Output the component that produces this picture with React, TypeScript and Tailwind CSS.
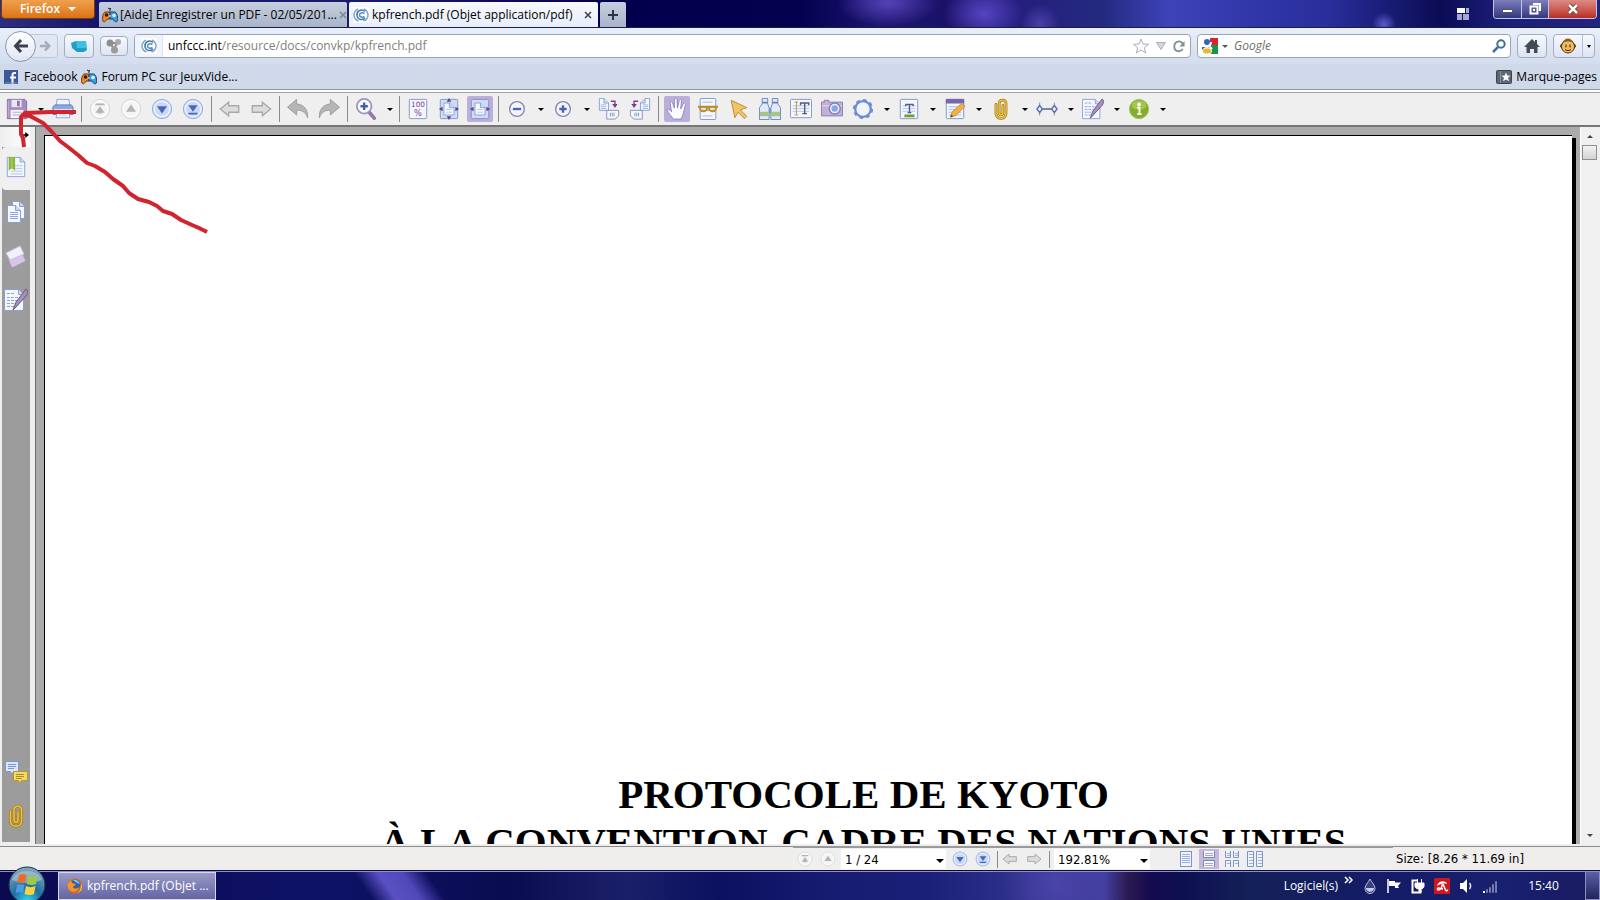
import React from 'react'

interface IconProps {
  children: React.ReactNode
  className?: string
  box?: number
}

const Icon: React.FC<IconProps> = ({ children, className = 'w-6 h-6', box = 24 }) => (
  <svg viewBox={`0 0 ${box} ${box}`} className={`${className} flex-shrink-0`} fill="none" aria-hidden="true">
    {children}
  </svg>
)

/* Shared page sheet used by most toolbar icons */
const Sheet = ({ x = 3, y = 1, w = 18, h = 22 }: { x?: number; y?: number; w?: number; h?: number }) => (
  <rect x={x + 0.5} y={y + 0.5} width={w - 1} height={h - 1} rx="1" fill="#f3f6fd" stroke="#7c93c4" />
)

const FoldedPage = ({ x, y, w, h }: { x: number; y: number; w: number; h: number }) => (
  <>
    <path
      d={`M${x} ${y}h${w - 5}l5 5v${h - 5}h-${w}z`}
      fill="#f3f7ff"
      stroke="#8a9fcf"
    />
    <path d={`M${x + w - 5} ${y}v5h5`} fill="#cfdaf2" stroke="#8a9fcf" />
  </>
)

const SaveIcon = () => (
  <Icon>
    <path d="M1.500 1.500h19l2 2v19h-21z" fill="#a78bc4" stroke="#86699f" />
    <path d="M2.500 3v18" stroke="#c6b2da" />
    <rect x="6" y="2" width="11" height="8" fill="#ece6f4" />
    <rect x="12" y="3" width="3" height="6" fill="#8d74a8" />
    <rect x="5" y="13" width="14" height="9" fill="#f7f7fb" />
    <path d="M7 15.500h10M7 18.500h10" stroke="#a9a3bb" />
  </Icon>
)

const PrintIcon = () => (
  <Icon>
    <path d="M5.500 1.500h13l1 7h-15z" fill="#eef3fd" stroke="#8b9fd0" />
    <path d="M1 10l2-2.500h18l2 2.500v8H1z" fill="#8ea7e2" stroke="#6478b4" />
    <path d="M2 12.500h20" stroke="#dfe7fb" />
    <path d="M5.500 15.500h13l1 6h-15z" fill="#f5f8ff" stroke="#8b9fd0" />
    <path d="M8 18.500h8" stroke="#b5c2e2" />
  </Icon>
)

type Dir = 'first' | 'up' | 'down' | 'last'

const RoundIcon = ({ dir, className }: { dir: Dir; className?: string }) => {
  const off = dir === 'first' || dir === 'up'
  const fill = off ? '#b4b4b4' : '#4a68b2'
  return (
    <Icon className={className}>
      <circle cx="12" cy="12" r="10.500" fill={off ? '#f4f4f4' : '#c9d8f8'} stroke={off ? '#d2d2d2' : '#8fa6dc'} />
      <circle cx="12" cy="12" r="8.500" stroke={off ? '#fdfdfd' : '#eef3ff'} strokeWidth="1.500" />
      {dir === 'up' && <path d="M12 7l5.500 8h-11z" fill={fill} />}
      {dir === 'down' && <path d="M12 17l5.500-8h-11z" fill={fill} />}
      {dir === 'first' && <path d="M7 6h10v2H7zM12 9l5 7h-3v1h-4v-1H7z" fill={fill} />}
      {dir === 'last' && <path d="M7 16h10v2H7zM12 15l5-7H7z" fill={fill} />}
    </Icon>
  )
}

const BlockArrow = ({ right = false, className }: { right?: boolean; className?: string }) => (
  <Icon className={className}>
    <path
      d={right ? 'M22.500 12l-9-7.500v4h-11v7h11v4z' : 'M1.500 12l9-7.500v4h11v7h-11v4z'}
      fill="#dcdcdc"
      stroke="#a9a9a9"
      strokeWidth="1.500"
    />
  </Icon>
)

const CurveArrow = ({ right = false }: { right?: boolean }) => (
  <Icon>
    <path
      d={right ? 'M23.500 10l-10-8.500v5C6 7 1 12 1.500 21.500 4 15 8 13 13.500 13.500v5z' : 'M.5 10l10-8.500v5C18 7 23 12 22.500 21.500 20 15 16 13 10.500 13.500v5z'}
      fill="#b5b5b5"
      stroke="#9b9b9b"
    />
  </Icon>
)

const ZoomIcon = () => (
  <Icon>
    <path d="M15 15l6 7" stroke="#8d7ba5" strokeWidth="4" strokeLinecap="round" />
    <circle cx="10" cy="9" r="8" fill="#f7f9ff" stroke="#9c96bd" strokeWidth="2" />
    <path d="M10 5v8M6 9h8" stroke="#3f5fae" strokeWidth="2.500" />
  </Icon>
)

const Percent = () => (
  <Icon>
    <Sheet x={2} w={20} />
    <text x="12" y="10" textAnchor="middle" fontSize="8" fontFamily="DejaVu Sans" fill="#7a3f94">100</text>
    <text x="12" y="20" textAnchor="middle" fontSize="9" fontFamily="DejaVu Sans" fill="#7a3f94">%</text>
  </Icon>
)

const FitIcon = ({ page = false }: { page?: boolean }) => (
  <Icon>
    <rect x="2.500" y="1.500" width="19" height="21" rx="1" fill="#cfdbf5" stroke="#7c93c4" />
    <FoldedPage x={6.5} y={5.5} w={11} h={13} />
    <path d="M9 12.500h6M9 15.500h6" stroke="#b4c2e2" />
    <path d="M1 12l4-2.500v5zM23 12l-4-2.500v5z" fill="#54459a" />
    {page && <path d="M12 0l2.500 4h-5zM12 24l2.500-4h-5z" fill="#54459a" />}
  </Icon>
)

const CircleSign = ({ plus = false }: { plus?: boolean }) => (
  <Icon>
    <circle cx="12" cy="12" r="8" fill="#f1f5ff" stroke="#8a86ae" strokeWidth="1.500" />
    <path d={plus ? 'M12 8v8M8 12h8' : 'M7.500 12h9'} stroke="#4665b0" strokeWidth="2.500" />
  </Icon>
)

const RotateIcon = ({ left = false }: { left?: boolean }) => (
  <Icon>
    <g transform={left ? 'translate(24 0) scale(-1 1)' : undefined}>
      <FoldedPage x={1.5} y={.5} w={10} h={13} />
      <path d="M3 7.500h6M3 9.500h6M3 11.500h6" stroke="#a4b3da" />
      <path d="M14 3.500h4.500V7" stroke="#7a3f94" strokeWidth="1.500" />
      <path d="M18.500 11l-3-4.500h6z" fill="#7a3f94" />
      <path d="M9.500 13.500h13v6l-4 3.500h-9z" fill="#f3f7ff" stroke="#8290b4" />
      <path d="M13.500 16v4M15.500 16v4M17.500 16v4" stroke="#8290b4" />
    </g>
  </Icon>
)

const HandIcon = () => (
  <Icon>
    <path
      d="M8 23c-2-3-5-6-7-10 1-1.500 3-.500 5 2L4.500 5c.500-1.500 2-1.500 2.500 0l2 6 .300-9.500c.700-1.500 2.200-1.500 2.700 0l.500 9.500 2-8.500c.700-1.300 2.200-1 2.500.300L16 12l3-6c1-1 2.300-.300 2.300 1L18.500 18l-2 5z"
      fill="#fbfcff"
      stroke="#8c88bb"
    />
  </Icon>
)

const ReadIcon = () => (
  <Icon>
    <Sheet x={3} y={0} w={18} h={11} />
    <Sheet x={3} y={13} w={18} h={11} />
    <path d="M6 4.500h11M6 19.500h11" stroke="#a4b3da" />
    <path d="M1 9.500h22M3 9.500c0 7 8 6 8 1 .5-1 1.500-1 2 0 0 5 8 6 8-1" stroke="#c08f1d" strokeWidth="2" />
  </Icon>
)

const CursorIcon = () => (
  <Icon>
    <path d="M3.500 2.500l17 8-7 2.500 7 7-2.500 2.500-7-7-3.500 6z" fill="#f0c467" stroke="#bb8a2b" />
  </Icon>
)

const BinocularsIcon = () => (
  <Icon>
    <path d="M3.500 .5h6v6l1.500 4v13H.5v-13l3-4zM14.500 .5h6v6l3 4v13H13v-13l1.500-4z" fill="#e1eafa" stroke="#6480bd" />
    <path d="M3.500 5h6M14.500 5h6" stroke="#6480bd" strokeWidth="2" />
    <path d="M1 15h10v5H1zM13 15h10v5H13z" fill="#a5c583" />
    <path d="M11 11h2v6h-2z" fill="#7893cc" />
  </Icon>
)

const SelectTextIcon = () => (
  <Icon>
    <rect x=".5" y="1.500" width="23" height="20" rx="1" fill="#f3f6fd" stroke="#7c93c4" />
    <path d="M3 8.500h18M3 11.500h18M3 14.500h18" stroke="#b5c3e6" />
    <path d="M11 5.500h10M16 5v12M13.500 17h5M11.500 5v3M20.500 5v3" stroke="#55587f" strokeWidth="1.500" />
    <path d="M5 4.500h4M7 4v14M5 18.500h4" stroke="#b79442" />
  </Icon>
)

const CameraIcon = () => (
  <Icon>
    <path d="M.5 4.500h3v-2h5v2h15v15H.5z" fill="#c3afd8" stroke="#8d77a8" />
    <path d="M1 8.500h22" stroke="#e9dff3" />
    <circle cx="15" cy="11.500" r="6" fill="#e8eefb" stroke="#7a82b9" strokeWidth="1.500" />
    <circle cx="15" cy="11.500" r="3.500" fill="#8ba6dd" />
  </Icon>
)

const StampIcon = () => (
  <Icon>
    <circle cx="12" cy="12" r="8.500" fill="#f0f4fe" stroke="#6c8cd4" strokeWidth="2.500" />
    <circle cx="12" cy="12" r="10" stroke="#6c8cd4" strokeWidth="2" strokeDasharray="4 3.800" />
  </Icon>
)

const HighlightIcon = () => (
  <Icon>
    <Sheet x={2} w={20} />
    <path d="M5 8.500h14M5 11.500h14M5 14.500h14" stroke="#b5c3e6" />
    <path d="M8 7h9M12.500 7v9M10.500 16h4M8.500 7v2M16.500 7v2" stroke="#55587f" strokeWidth="1.500" />
    <path d="M7 18h11v3H7z" fill="#70a032" />
  </Icon>
)

const NoteIcon = () => (
  <Icon>
    <Sheet x={2} w={20} />
    <path d="M2 1h20v5H2z" fill="#7668ab" />
    <path d="M5 9.500h14M5 12.500h14M5 15.500h14M5 18.500h14" stroke="#a9b9e0" />
    <path d="M7 21l2-6 10-9 4 3-10 10z" fill="#f2b04b" stroke="#c98a32" />
    <path d="M7 21l1-3 2 2z" fill="#444" />
  </Icon>
)

const ClipIcon = () => (
  <Icon>
    <path
      d="M6.500 7v10c0 7 11 7 11 0V6c0-5-7.500-5-7.500 0v10c0 3 4 3 4 0V8"
      stroke="#a87a12"
      strokeWidth="3"
      strokeLinecap="round"
    />
    <path d="M6.500 7v10c0 7 11 7 11 0V6c0-5-7.500-5-7.500 0v10c0 3 4 3 4 0V8" stroke="#edc446" strokeWidth="1.500" strokeLinecap="round" />
  </Icon>
)

const MeasureIcon = () => (
  <Icon>
    <path d="M4 12h16" stroke="#6f7cab" strokeWidth="2" />
    <path d="M4 8l3 4-3 4-3-4zM20 8l3 4-3 4-3-4z" fill="#e6ecfb" stroke="#5a6da8" strokeWidth="1.500" />
    <path d="M4 5v3M4 16v3M20 5v3M20 16v3" stroke="#7b83a8" />
  </Icon>
)

const SignIcon = () => (
  <Icon>
    <FoldedPage x={.5} y={1.5} w={19} h={21} />
    <path d="M3 5.500h8M3 9.500h13M3 12.500h13M3 15.500h10M3 18.500h9" stroke="#93a3d0" strokeDasharray="3 1" />
    <path d="M9 22l3-8L22 1c2 1 2 4 0 7L12 19z" fill="#a78fc0" stroke="#6d5780" />
  </Icon>
)

const InfoIcon = () => (
  <Icon>
    <circle cx="12" cy="12" r="10.500" fill="#86ac2c" stroke="#a3be62" />
    <ellipse cx="12" cy="8" rx="8" ry="5" fill="#a2c74c" />
    <circle cx="12" cy="7" r="2" fill="#fff" />
    <path d="M10 10.500h2.500V17M10 17.500h5" stroke="#fff" strokeWidth="2" />
  </Icon>
)

const BookmarkIcon = () => (
  <Icon className="w-[22px] h-6">
    <FoldedPage x={2.5} y={1.5} w={19} h={21} />
    <path d="M6 10.500h13M6 13.500h13M6 16.500h13M6 19.500h13" stroke="#b4c3e6" />
    <path d="M4 1h7v15l-3.500-3L4 16z" fill="#8cb73a" />
    <path d="M7.500 1v12" stroke="#b9d67a" />
  </Icon>
)

const PagesIcon = () => (
  <Icon>
    <FoldedPage x={8.5} y={1.5} w={12} h={17} />
    <FoldedPage x={3.5} y={5.5} w={13} h={17} />
    <path d="M6 12.500h8M6 14.500h8M6 16.500h8M6 18.500h8" stroke="#92a5d8" />
  </Icon>
)

const LayersIcon = () => (
  <Icon>
    <path d="M4 15l14-6 4 8-14 7z" fill="#d7c6e6" stroke="#a897b8" />
    <path d="M2 9l14-7 4 8-14 6z" fill="#f0f2fb" stroke="#c0c4d8" />
  </Icon>
)

const CommentsIcon = () => (
  <Icon>
    <path d="M1.500 1.500h13v10h-5l-2 3-1-3h-5z" fill="#dbe6fb" stroke="#7f97cc" />
    <path d="M4 4.500h8M4 6.500h8M4 8.500h6" stroke="#7f97cc" />
    <path d="M9.500 11.500h14v9h-6l-2 3-1-3h-5z" fill="#f6d964" stroke="#b9962d" />
    <path d="M12 14.500h8M12 16.500h8M12 18.500h6" stroke="#a98a2c" />
  </Icon>
)

const GamepadIcon = () => (
  <Icon box={16} className="w-4 h-4">
    <path d="M6 1l2 1 1-1M8 2v2" stroke="#222" />
    <path d="M1 14c-1-3 0-8 2-9h5v7H5c-1 2-3 4-4 2z" fill="#ee8a2b" stroke="#6b3210" />
    <path d="M15.300 14c.700-3 0-8-2.300-9H8v7h3c1 2 3 4 4.300 2z" fill="#3aa0e6" stroke="#123f72" />
    <circle cx="4.500" cy="8" r="1.800" fill="#3a1608" />
    <circle cx="12" cy="8.500" r="1.800" fill="#dff1ff" />
    <path d="M7 9h2" stroke="#fff" />
  </Icon>
)

const UnfcccIcon = () => (
  <Icon box={16} className="w-4 h-4">
    <rect width="16" height="16" fill="#fff" />
    <path d="M5 2C1 4 0 8 2 11.500c1 1.500 2 2 3.500 2.500M11 2c4 2 5 6 3 9.500-1 1.500-2 2-3.500 2.500" stroke="#7ea6cc" strokeWidth="1.500" />
    <path d="M12 4.500C8 1 3.500 4.500 4 8.500c.500 4 5 5.500 8 2.500" stroke="#3f75aa" strokeWidth="1.500" />
    <path d="M11.500 6.500C9 5 6.500 6 6.500 8s2.500 3 5 1.500" stroke="#5b8cba" strokeWidth="1.500" />
  </Icon>
)

const Caret = ({ className = 'border-t-black' }: { className?: string }) => (
  <span className={`inline-block w-0 h-0 border-x-[3px] border-x-transparent border-t-[3px] ${className}`} />
)

interface Tool {
  label?: string
  icon?: React.ReactNode
  menu?: boolean
  active?: boolean
}

// An entry without a label is a separator
const tools: Tool[] = [
  { label: 'Enregistrer', icon: <SaveIcon />, menu: true },
  { label: 'Imprimer', icon: <PrintIcon /> },
  {},
  { label: 'Première page', icon: <RoundIcon dir="first" /> },
  { label: 'Page précédente', icon: <RoundIcon dir="up" /> },
  { label: 'Page suivante', icon: <RoundIcon dir="down" /> },
  { label: 'Dernière page', icon: <RoundIcon dir="last" /> },
  {},
  { label: 'Vue précédente', icon: <BlockArrow /> },
  { label: 'Vue suivante', icon: <BlockArrow right /> },
  {},
  { label: 'Annuler', icon: <CurveArrow /> },
  { label: 'Rétablir', icon: <CurveArrow right /> },
  {},
  { label: 'Zoom', icon: <ZoomIcon />, menu: true },
  {},
  { label: 'Taille réelle', icon: <Percent /> },
  { label: 'Page entière', icon: <FitIcon page /> },
  { label: 'Pleine largeur', icon: <FitIcon />, active: true },
  {},
  { label: 'Zoom arrière', icon: <CircleSign />, menu: true },
  { label: 'Zoom avant', icon: <CircleSign plus />, menu: true },
  { label: 'Rotation à droite', icon: <RotateIcon /> },
  { label: 'Rotation à gauche', icon: <RotateIcon left /> },
  {},
  { label: 'Main', icon: <HandIcon />, active: true },
  { label: 'Lecture', icon: <ReadIcon /> },
  { label: 'Sélection', icon: <CursorIcon /> },
  { label: 'Rechercher', icon: <BinocularsIcon /> },
  { label: 'Sélection de texte', icon: <SelectTextIcon /> },
  { label: 'Instantané', icon: <CameraIcon /> },
  { label: 'Tampon', icon: <StampIcon />, menu: true },
  { label: 'Surligner', icon: <HighlightIcon />, menu: true },
  { label: 'Note', icon: <NoteIcon />, menu: true },
  { label: 'Joindre', icon: <ClipIcon />, menu: true },
  { label: 'Mesurer', icon: <MeasureIcon />, menu: true },
  { label: 'Signer', icon: <SignIcon />, menu: true },
  { label: 'À propos', icon: <InfoIcon />, menu: true }
]

const chromeButton =
  'flex items-center justify-center rounded-sm border border-[#a3adbf] bg-linear-to-b from-[#f6f9fd] to-[#dde5f2]'

const TitleBar = () => (
  <header className="h-7 flex items-end pl-px flex-shrink-0 bg-[radial-gradient(circle_at_86.5%_90%,#5a58cc_0,transparent_12px),radial-gradient(ellipse_50px_24px_at_55.5%_10%,#5443b6,transparent),radial-gradient(ellipse_40px_30px_at_61.5%_50%,#5545c2,transparent),radial-gradient(ellipse_20px_20px_at_65%_90%,#4a40a8,transparent),linear-gradient(90deg,#2b2f84_0,#15156b_6%,#1b1b6e_22%,#02004c_39%,#04024e_50%,#1d1472_55%,#1b1268_59%,#251c7c_63%,#242a80_69%,#3e43b8_73%,#2f35a6_79%,#2a2e9c_83%,#141668_88%,#0b0b55_90%,#1b1f78_94%,#23247e)] border-b border-b-[#1c1e4a]">
    <button className="self-start w-[94px] h-[19px] flex items-center justify-center gap-2 rounded-b-sm border border-t-0 border-[#7c3c08] bg-linear-to-b from-[#efa04c] to-[#dd7310] text-white text-xs leading-[18px] font-semibold">
      Firefox
      <span className="inline-block border-x-4 border-x-transparent border-t-4 border-t-white" />
    </button>
    <nav className="flex items-end gap-[2px] pl-1" aria-label="Onglets">
      <div className="h-[25px] w-[248px] pl-[3px] pr-1 flex items-center gap-[2px] bg-linear-to-b from-[#c6cfdf] to-[#a9b4c9] rounded-t-xs">
        <GamepadIcon />
        <button className="flex-1 text-left whitespace-nowrap text-black">[Aide] Enregistrer un PDF - 02/05/201...</button>
        <button aria-label="Fermer l'onglet Aide">
          <Icon box={8} className="w-2 h-2">
            <path d="M1 1l6 6M7 1L1 7" stroke="#7f8896" strokeWidth="1.500" />
          </Icon>
        </button>
      </div>
      <div className="h-[25px] w-[249px] pl-1 pr-[6px] flex items-center gap-[3px] bg-linear-to-b from-[#f6f9fe] to-[#e8eef9] rounded-t-xs">
        <UnfcccIcon />
        <button className="flex-1 text-left whitespace-nowrap text-black">kpfrench.pdf (Objet application/pdf)</button>
        <button aria-label="Fermer l'onglet kpfrench">
          <Icon box={8} className="w-2 h-2">
            <path d="M1 1l6 6M7 1L1 7" stroke="#3c434e" strokeWidth="1.500" />
          </Icon>
        </button>
      </div>
      <button aria-label="Nouvel onglet" className="h-[25px] w-[26px] flex items-center justify-center bg-linear-to-b from-[#c6cfdf] to-[#a9b4c9] rounded-t-xs">
        <Icon box={12} className="w-3 h-3">
          <path d="M6 1v10M1 6h10" stroke="#2f3640" strokeWidth="2" />
        </Icon>
      </button>
    </nav>
    <div className="ml-auto self-start flex items-start pr-[3px]">
      <button aria-label="Groupes d'onglets" className="mt-2 mr-6">
        <svg viewBox="0 0 12 12" className="w-3 h-3" aria-hidden="true">
          <path d="M0 0h8v5H0z" fill="#fff" />
          <path d="M9 0h3v5H9zM0 6h5v6H0zM6 6h6v6H6z" fill="#a7a7d6" />
        </svg>
      </button>
      <div className="flex h-[19px] border border-t-0 border-[#c3c5e6] rounded-b-sm overflow-hidden">
        <button aria-label="Réduire" className="w-7 flex items-center justify-center bg-linear-to-b from-[#7d7fbb] to-[#34367f] border-r border-[#c3c5e6]">
          <span className="w-[11px] h-1 mt-1 bg-white border border-[#555]" />
        </button>
        <button aria-label="Restaurer" className="w-[27px] flex items-center justify-center bg-linear-to-b from-[#7d7fbb] to-[#34367f] border-r border-[#c3c5e6]">
          <Icon box={12} className="w-3 h-3">
            <path d="M4 1h7v7M1.500 3.500h7v7h-7z" stroke="#fff" strokeWidth="2" />
            <path d="M4 6h2v2H4z" fill="#fff" />
          </Icon>
        </button>
        <button aria-label="Fermer" className="w-[47px] flex items-center justify-center bg-linear-to-b from-[#dd8a86] to-[#b92a20]">
          <Icon box={12} className="w-3 h-3">
            <path d="M2 2l8 8M10 2l-8 8" stroke="#6a2a2a" strokeWidth="4" />
            <path d="M2 2l8 8M10 2l-8 8" stroke="#fff" strokeWidth="2.500" />
          </Icon>
        </button>
      </div>
    </div>
  </header>
)

const NavBar = () => (
  <div className="h-9 flex items-center px-[5px] flex-shrink-0 bg-linear-to-b from-[#e9effa] to-[#d3ddee]">
    <button aria-label="Précédent" className="z-10 w-[31px] h-[31px] rounded-full border border-[#8e97a8] bg-linear-to-b from-white to-[#dfe6f2] flex items-center justify-center">
      <Icon box={16} className="w-4 h-4">
        <path d="M8 2L2.500 8 8 14M3 8h12" stroke="#3c434f" strokeWidth="3" />
      </Icon>
    </button>
    <button aria-label="Suivant" className="-ml-2 w-[30px] h-6 pl-1 rounded-r-sm border border-[#c0c9d8] bg-[#e0e7f3] flex items-center justify-center">
      <Icon box={14} className="w-3 h-3">
        <path d="M7 2l5 5-5 5M12 7H1" stroke="#a5adb9" strokeWidth="3" />
      </Icon>
    </button>
    <button aria-label="Étiquette" className={`${chromeButton} ml-[6px] w-[30px] h-6`}>
      <Icon box={16} className="w-4 h-4">
        <path d="M0 5l5-2h10l1 9-3 2H6L1 10z" fill="#1f9fc4" />
        <path d="M5 3h10v7H6z" fill="#3fc0e0" />
      </Icon>
    </button>
    <button aria-label="Modules" className={`${chromeButton} ml-[6px] w-7 h-5`}>
      <Icon box={16} className="w-4 h-4">
        <path d="M4 5l7 0-3 6z" stroke="#8a8a8a" strokeWidth="2" />
        <circle cx="4" cy="5" r="3.500" fill="#8f8f8f" />
        <circle cx="12" cy="4" r="3" fill="#a9a9a9" />
        <circle cx="8.500" cy="12" r="3.500" fill="#9b9b9b" />
      </Icon>
    </button>
    <div className="ml-[6px] flex-1 h-6 flex items-center bg-white border border-[#9aa4b6] rounded-sm overflow-hidden">
      <span className="w-7 h-full flex items-center justify-center bg-[#f0f4fb] border-r border-[#dfe4ee]">
        <UnfcccIcon />
      </span>
      <a href="#unfccc" className="flex-1 pl-[5px] text-[#808080]">
        <span className="text-black">unfccc.int</span>/resource/docs/convkp/kpfrench.pdf
      </a>
      <button aria-label="Marquer cette page">
        <Icon box={16} className="w-4 h-4">
          <path d="M8 1l2 5 5.500.300-4.200 3.500 1.500 5.200L8 12l-4.800 3 1.500-5.200L.500 6.300 6 6z" stroke="#a9aeb8" fill="#fbfbfb" />
        </Icon>
      </button>
      <button aria-label="Historique" className="ml-[6px]">
        <Icon box={12} className="w-3 h-3">
          <path d="M1.500 2.500h9L6 9.500z" fill="#d2d5da" stroke="#a9aeb8" />
        </Icon>
      </button>
      <button aria-label="Actualiser" className="ml-[5px] mr-[5px]">
        <Icon box={14} className="w-[13px] h-[13px]">
          <path d="M11.500 9.500c-2 4-9 3.500-9-2.500s7-7 9-3" stroke="#7f9099" strokeWidth="2" />
          <path d="M13.500 1v6H8z" fill="#7f9099" />
        </Icon>
      </button>
    </div>
    <div className="ml-[6px] w-[314px] h-6 pl-1 pr-1 flex items-center bg-white border border-[#9aa4b6] rounded-sm">
      <Icon box={16} className="w-4 h-4">
        <path d="M8 0h8v7H8z" fill="#d8252c" />
        <path d="M8 7h8v9H9z" fill="#179447" />
        <path d="M0 9h8v4H0z" fill="#2f62b8" />
        <circle cx="5" cy="4" r="3" fill="#2f62b8" />
        <path d="M2 8c3 2 7 0 7-4M7 8l3 3" stroke="#fff" strokeWidth="2" />
        <ellipse cx="5" cy="13" rx="4.500" ry="3" fill="#f0b62a" stroke="#fff" />
      </Icon>
      <button aria-label="Moteur de recherche" className="ml-1 flex">
        <Caret className="border-t-[#555]" />
      </button>
      <input aria-label="Recherche" placeholder="Google" className="flex-1 min-w-0 ml-[6px] outline-none placeholder:italic placeholder:text-[#6f6f6f]" />
      <button aria-label="Lancer la recherche">
        <Icon box={14} className="w-[14px] h-[14px]">
          <circle cx="9" cy="5" r="3.700" stroke="#3f6f9f" strokeWidth="2" />
          <path d="M6 8l-5 5" stroke="#3f6f9f" strokeWidth="2.500" />
        </Icon>
      </button>
    </div>
    <button aria-label="Accueil" className={`${chromeButton} ml-[6px] w-[30px] h-6`}>
      <Icon box={16} className="w-4 h-4">
        <path d="M8 1L0 9h2.500v6H6v-4h4v4h3.500V9H16l-3-3V2h-2v2z" fill="#434b57" />
      </Icon>
    </button>
    <div className={`${chromeButton} ml-[6px] w-[42px] h-6`}>
      <button aria-label="Compte" className="flex-1 flex justify-center">
        <Icon box={16} className="w-4 h-4">
          <circle cx="2.500" cy="8" r="2" fill="#c98a35" stroke="#5a3510" />
          <circle cx="13.500" cy="8" r="2" fill="#c98a35" stroke="#5a3510" />
          <circle cx="8" cy="8.500" r="6.500" fill="#f0bc5c" stroke="#5a3510" />
          <path d="M2.500 5c2-6 9-6 11 0-3-2-8-2-11 0z" fill="#8f5a20" />
          <path d="M6 6.500v3M10 6.500v3M5 11.500c2 1.500 4 1.500 6 0" stroke="#3b2208" />
        </Icon>
      </button>
      <button aria-label="Options du compte" className="w-3 h-full border-l border-[#b7c0d0] flex items-center justify-center">
        <span className="border-x-2 border-x-transparent border-t-[3px] border-t-black" />
      </button>
    </div>
  </div>
)

const BookmarksBar = () => (
  <div className="h-[26px] flex items-center pl-1 pr-[3px] flex-shrink-0 bg-[#cfd9ea] border-b border-[#8f98a9]">
    <a href="#facebook" className="flex items-center gap-[6px]">
      <Icon box={14} className="w-[14px] h-[14px]">
        <rect width="14" height="14" fill="#3b5998" />
        <path d="M12 3H10.500C9 3 8.500 4 8.500 5v9M6 7.500h6" stroke="#fff" strokeWidth="2" />
        <path d="M1 13h12" stroke="#7d95c8" />
      </Icon>
      Facebook
    </a>
    <a href="#forum" className="flex items-center gap-1 ml-1">
      <GamepadIcon />
      Forum PC sur JeuxVide...
    </a>
    <button className="ml-auto flex items-center gap-1">
      <Icon box={16} className="w-4 h-4">
        <rect x=".5" y="1.500" width="15" height="13" rx="1" fill="#5d6672" stroke="#3c444f" />
        <path d="M4.500 2v12" stroke="#8b95a2" />
        <path d="M10 3.500l1.300 3 3.200.300-2.400 2 .800 3.400L10 10.500l-2.900 1.700.8-3.400-2.400-2 3.200-.300z" fill="#fff" />
      </Icon>
      Marque-pages
    </button>
  </div>
)

const PdfToolbar = () => (
  <div role="toolbar" aria-label="Outils PDF" className="mt-[2px] h-[35px] flex items-center pl-px flex-shrink-0 bg-[#efefef] border-t border-t-[#a0a0a0] border-b-2 border-b-[#767676]">
    {tools.map((tool, i) =>
      tool.label ? (
        <div key={i} className="flex items-center">
          <span className="w-[31px] flex justify-center">
            <button
              aria-label={tool.label}
              className={`w-[26px] h-[26px] flex items-center justify-center rounded-xs ${tool.active ? 'bg-[#bcaeda]' : ''}`}
            >
              <span className="flex [&>svg]:w-[22px] [&>svg]:h-[22px]">{tool.icon}</span>
            </button>
          </span>
          {tool.menu && (
            <button aria-label={`Options : ${tool.label}`} className="w-[15px] h-6 pl-[2px] flex items-center justify-center">
              <Caret />
            </button>
          )}
        </div>
      ) : (
        <span key={i} className="w-[6px] h-[26px] pl-px flex justify-center">
          <span className="w-px bg-[#8a8a8a]" />
        </span>
      )
    )}
  </div>
)

const SidePanel = () => (
  <aside className="w-9 flex flex-shrink-0 bg-[#efefef] border-r border-[#6f6f6f]">
    <div className="ml-[2px] w-7 flex flex-col bg-[#9c9c9c] mb-[2px]">
      <div className="h-5 pb-1 flex items-center justify-end pr-px bg-linear-to-r from-[#efefef] to-white">
        <button aria-label="Développer le panneau">
          <Icon box={8} className="w-[6px] h-2">
            <path d="M0 4h4" stroke="#000" strokeWidth="2" />
            <path d="M3 0l5 4-5 4z" fill="#000" />
          </Icon>
        </button>
      </div>
      <button aria-label="Signets" className="h-[43px] pb-1 flex items-center justify-center bg-[#f0f0f0] rounded-l-sm">
        <BookmarkIcon />
      </button>
      <button aria-label="Pages" className="h-11 flex items-center justify-center">
        <PagesIcon />
      </button>
      <button aria-label="Calques" className="h-11 flex items-center justify-center">
        <LayersIcon />
      </button>
      <button aria-label="Signatures" className="h-11 flex items-center justify-center">
        <SignIcon />
      </button>
      <div className="flex-1" />
      <button aria-label="Commentaires" className="h-11 flex items-center justify-center">
        <CommentsIcon />
      </button>
      <button aria-label="Pièces jointes" className="h-11 mb-1 flex items-center justify-center">
        <ClipIcon />
      </button>
    </div>
  </aside>
)

const Viewer = () => (
  <main className="flex-1 min-h-0 flex">
    <SidePanel />
    <div className="flex-1 pl-2 pr-1 pt-2 flex bg-[#ababab] overflow-hidden">
      <article className="flex-1 flex flex-col justify-end bg-white border-t border-l border-black overflow-hidden">
        {/* The second line runs past the bottom of the view */}
        <h1 className="-mb-[22px] pl-[110px] text-center whitespace-nowrap text-black font-bold text-[41px] leading-[48px] font-['Liberation_Serif','Times_New_Roman',serif]">
          PROTOCOLE DE KYOTO
          <br />
          À LA CONVENTION-CADRE DES NATIONS UNIES
        </h1>
      </article>
      <div className="w-1 mt-[3px] bg-black" />
    </div>
    <div className="w-5 pl-px pr-[3px] flex flex-col items-center bg-[#f0f0f0] border-l border-white">
      <button aria-label="Défiler vers le haut" className="h-[18px] flex items-center">
        <span className="border-x-[3px] border-x-transparent border-b-[3px] border-b-[#444]" />
      </button>
      <div className="w-[15px] h-[15px] bg-linear-to-b from-[#f3f3f3] to-[#d3d3d3] border border-[#8f8f8f]" />
      <div className="flex-1" />
      <button aria-label="Défiler vers le bas" className="h-[18px] flex items-center">
        <Caret className="border-t-[#444]" />
      </button>
    </div>
  </main>
)

const ViewIcon = ({ kind }: { kind: 'single' | 'scroll' | 'grid' | 'facing' }) => (
  <Icon box={16} className="w-4 h-4">
    {kind === 'single' && (
      <>
        <rect x="2.500" y=".5" width="11" height="15" fill="#eef3fd" stroke="#7c93c4" />
        <path d="M4 3.500h8M4 5.500h8M4 7.500h8M4 9.500h8M4 11.500h8" stroke="#9fb0da" />
      </>
    )}
    {kind === 'scroll' && (
      <>
        <path d="M2.500 0v6.500h11V0M2.500 16V9.500h11V16" fill="#f7f9ff" stroke="#7c86b4" />
        <path d="M4 2.500h8M4 4.500h8M4 12.500h8M4 14.500h8" stroke="#a3accb" />
      </>
    )}
    {kind === 'grid' && (
      <>
        <path d="M1.500 0v6.500h5V0M9.500 0v6.500h5V0M1.500 16V9.500h5V16M9.500 16V9.500h5V16" fill="#eef3fd" stroke="#7c93c4" />
        <path d="M3 2.500h3M3 4.500h3M11 2.500h3M11 4.500h3M3 12.500h3M11 12.500h3" stroke="#9fb0da" />
      </>
    )}
    {kind === 'facing' && (
      <>
        <path d="M.5.500h6v15h-6zM9.500.500h6v15h-6z" fill="#eef3fd" stroke="#7c93c4" />
        <path d="M2 3.500h4M2 6.500h4M2 9.500h4M2 12.500h4M11 3.500h4M11 6.500h4M11 9.500h4M11 12.500h4" stroke="#9fb0da" />
      </>
    )}
  </Icon>
)

const StatusSelect = ({ label, value, className }: { label: string; value: string; className: string }) => (
  <span className={`relative flex items-center h-5 bg-white ${className}`}>
    <select aria-label={label} className="w-full h-full pl-1 pt-[2px] appearance-none outline-none text-[13px] leading-[18px]">
      <option>{value}</option>
    </select>
    <span className="absolute right-[2px] top-[10px] border-x-4 border-x-transparent border-t-4 border-t-black pointer-events-none" />
  </span>
)

const StatusBar = () => (
  <div className="h-[26px] pt-[2px] flex flex-shrink-0 bg-[#f0eded] text-black font-['DejaVu_Sans_Condensed','DejaVu_Sans',sans-serif]">
    <div className="flex-1 border-t border-[#8b8b8b]" />
    <div className="w-[600px] flex items-center border-t-2 border-[#9a9a9a] bg-[#efefef]">
      <button aria-label="Première page" className="w-[23px] flex justify-center">
        <RoundIcon dir="first" className="w-4 h-4" />
      </button>
      <button aria-label="Page précédente" className="w-[23px] flex justify-center">
        <RoundIcon dir="up" className="w-4 h-4" />
      </button>
      <StatusSelect label="Page" value="1 / 24" className="ml-[2px] w-[105px]" />
      <button aria-label="Page suivante" className="ml-[2px] w-[23px] flex justify-center">
        <RoundIcon dir="down" className="w-4 h-4" />
      </button>
      <button aria-label="Dernière page" className="w-[23px] flex justify-center">
        <RoundIcon dir="last" className="w-4 h-4" />
      </button>
      <span className="ml-[3px] w-px h-[17px] bg-[#8a8a8a]" />
      <button aria-label="Vue précédente" className="w-6 flex justify-center">
        <BlockArrow className="w-4 h-4" />
      </button>
      <button aria-label="Vue suivante" className="w-6 flex justify-center">
        <BlockArrow right className="w-4 h-4" />
      </button>
      <span className="ml-[3px] w-px h-[17px] bg-[#8a8a8a]" />
      <StatusSelect label="Zoom" value="192.81%" className="ml-1 w-24" />
      <div className="flex gap-[3px] ml-[26px]">
        {(['single', 'scroll', 'grid', 'facing'] as const).map((kind) => (
          <button
            key={kind}
            aria-label={`Affichage ${kind}`}
            className={`w-5 h-5 flex items-center justify-center ${kind === 'scroll' ? 'bg-[#c5b8dc]' : ''}`}
          >
            <ViewIcon kind={kind} />
          </button>
        ))}
      </div>
    </div>
    <div className="w-[207px] pl-[3px] flex items-center border-t border-[#8b8b8b] text-[13px] whitespace-nowrap">Size: [8.26 * 11.69 in]</div>
  </div>
)

const TaskBar = () => (
  <footer className="h-[30px] flex items-center flex-shrink-0 text-white border-t border-t-[#0a0a3c] shadow-[inset_0_1px_0_#8f90c8] bg-[radial-gradient(ellipse_60px_60px_at_66%_50%,#4a44a8,transparent_90%),linear-gradient(55deg,transparent_23%,#5a50c4_24.5%,#5048b8_26%,transparent_27.5%),linear-gradient(90deg,#0a0a50_0,#0e1266_20%,#0a0c50_32%,#1a2068_39%,#0c1060_45%,#161c70_52%,#1a2078_58%,#3c3a98_67%,#4440a0_69%,#2a1a50_70.5%,#150a50_72%,#0d1050_74%,#142058_78%,#141c66_86%,#182070_94%,#1a1a60)]">
    <button aria-label="Démarrer" className="relative z-10 ml-2 -mt-[2px]">
      <svg viewBox="0 0 38 38" className="w-[38px] h-[38px]" aria-hidden="true">
        <defs>
          <radialGradient id="orb" cx=".5" cy=".95" r=".9">
            <stop offset="0" stopColor="#35d6f5" />
            <stop offset=".45" stopColor="#1d6f9f" />
            <stop offset="1" stopColor="#7fa3b8" />
          </radialGradient>
        </defs>
        <circle cx="19" cy="19" r="18" fill="url(#orb)" stroke="#17324f" />
        <path d="M4 14C8 2 30 2 34 14c-10 4-20 4-30 0z" fill="#c2d5df" opacity=".5" />
        <path d="M11 9c3-1.500 5-1 7.500 0L17 17c-2.500-1-5-1-8 0z" fill="#ee6a2c" />
        <path d="M20 10c3 1.500 6 1.500 9.500 0L28 18c-3 1.500-6 1-9 0z" fill="#9ccb42" />
        <path d="M9 19c3-1 5-1 7.500 0L15 27c-2.500-1-4.500-1-7.500 0z" fill="#4d9be4" />
        <path d="M18 20c3 1.500 6 1.500 9.500 0L26 28c-3 1.500-6 1-9.500 0z" fill="#fbd341" />
      </svg>
    </button>
    <button className="ml-3 w-[158px] h-7 pl-2 flex items-center gap-1 border border-[#d5d6ec] bg-linear-to-b from-[#9a9bc6] to-[#6465a4]">
      <Icon box={16} className="w-4 h-4">
        <circle cx="8" cy="8" r="7.500" fill="#e0661a" />
        <circle cx="8.500" cy="6.500" r="5" fill="#2c64a8" />
        <path d="M6 2c3-1 6 1 7 4l-3-1z" fill="#8fc3ea" />
        <path d="M1 5c1 0 2-1 3-3 0 3 3 4 5 4-1 2-3 2-3 3 1 2 4 2 6 0-1 4-5 6-8 4C1 12 0 8 1 5z" fill="#f3952b" />
        <path d="M14 5c2 4 1 9-4 10 4-2 4-6 4-10z" fill="#f7c744" />
      </Icon>
      kpfrench.pdf (Objet ...
    </button>
    <div className="ml-auto flex items-center h-full">
      <span>Logiciel(s)</span>
      <button aria-label="Plus de logiciels" className="ml-[6px] mb-3">
        <Icon box={10} className="w-[10px] h-[10px]">
          <path d="M1 2l3 3-3 3M5 2l3 3-3 3" stroke="#fff" strokeWidth="1.500" />
        </Icon>
      </button>
      <div className="flex items-center gap-2 ml-2">
        <Icon box={16} className="w-4 h-4">
          <path d="M8 1c2 4 5 6 5 9.500a5 5 0 01-10 0C3 7 6 5 8 1z" fill="#39407e" stroke="#b9bddc" />
          <path d="M4 10h8c0 5-8 5-8 0z" fill="#c8cce6" />
        </Icon>
        <Icon box={16} className="w-4 h-4">
          <path d="M2 1v14" stroke="#fff" strokeWidth="1.500" />
          <path d="M3 3h6v1.500h6L12 8l1 2H9V8H3z" fill="#fff" />
        </Icon>
        <Icon box={16} className="w-4 h-4">
          <path d="M8 2.500H2.500v12h8V12" stroke="#fff" strokeWidth="2" />
          <path d="M5 5h9v3c0 2-2 3-3 3v3H9v-3c-2 0-4-1-4-3zM7.500 1v4M11.500 1v4" fill="#fff" stroke="#fff" />
        </Icon>
        <Icon box={16} className="w-4 h-4">
          <rect width="16" height="16" rx="1" fill="#d0151d" />
          <path d="M3 8c1-6 9-6 10-2-4-1-7 0-10 2z" fill="#fff" />
          <path d="M9 6l2.500 6c.5 1.500 2 1 2-.5M8 6.500c0 3-1.500 5.500-3.500 5.500-1.500 0-1.500-2 0-2 2 0 3 1 4.500 1" stroke="#fff" strokeWidth="1.500" />
        </Icon>
        <Icon box={16} className="w-4 h-4">
          <path d="M2 5h3l4-4v14l-4-4H2z" fill="#fff" />
          <path d="M11.500 5c1.500 2 1.500 4 0 6" stroke="#dfe0f2" strokeWidth="1.500" />
        </Icon>
        <Icon box={16} className="w-4 h-4">
          <path d="M1 13h2v2H1z" fill="#fff" />
          <path d="M4.500 11.500h1v3h-1zM7.500 9.500h1v5h-1zM10.500 6.500h1v8h-1zM13.500 3.500h1v11h-1z" fill="#2a2c68" stroke="#787aa8" />
        </Icon>
      </div>
      <time className="w-[87px] pl-1 text-center">15:40</time>
      <button aria-label="Afficher le bureau" className="w-[15px] h-full border border-[#8c8fc4] bg-linear-to-b from-[#5d60a4] to-[#20245f]" />
    </div>
  </footer>
)

/* Hand-drawn arrow pointing at the save button */
const SaveArrow = () => (
  <svg viewBox="0 0 220 240" className="absolute left-0 top-0 z-20 w-[220px] h-[240px] pointer-events-none" fill="none" aria-hidden="true">
    <path
      d="M76 112L50 112 25 113 21 117 21 134 23 138 24 147M21 115L30 116 43 123 52 132 60 141 68 147 78 155 87 163 95 166 105 172 113 179 123 186 129 193 138 199 149 202 157 206 163 211 172 214 181 220 192 225 199 228 207 232"
      stroke="#d0242e"
      strokeWidth="4"
      strokeLinejoin="bevel"
    />
  </svg>
)

export default function App() {
  return (
    <div className="relative h-screen flex flex-col overflow-hidden bg-white text-black text-xs font-['Open_Sans','Noto_Sans',sans-serif]">
      <TitleBar />
      <NavBar />
      <BookmarksBar />
      <PdfToolbar />
      <Viewer />
      <StatusBar />
      <TaskBar />
      <SaveArrow />
    </div>
  )
}
